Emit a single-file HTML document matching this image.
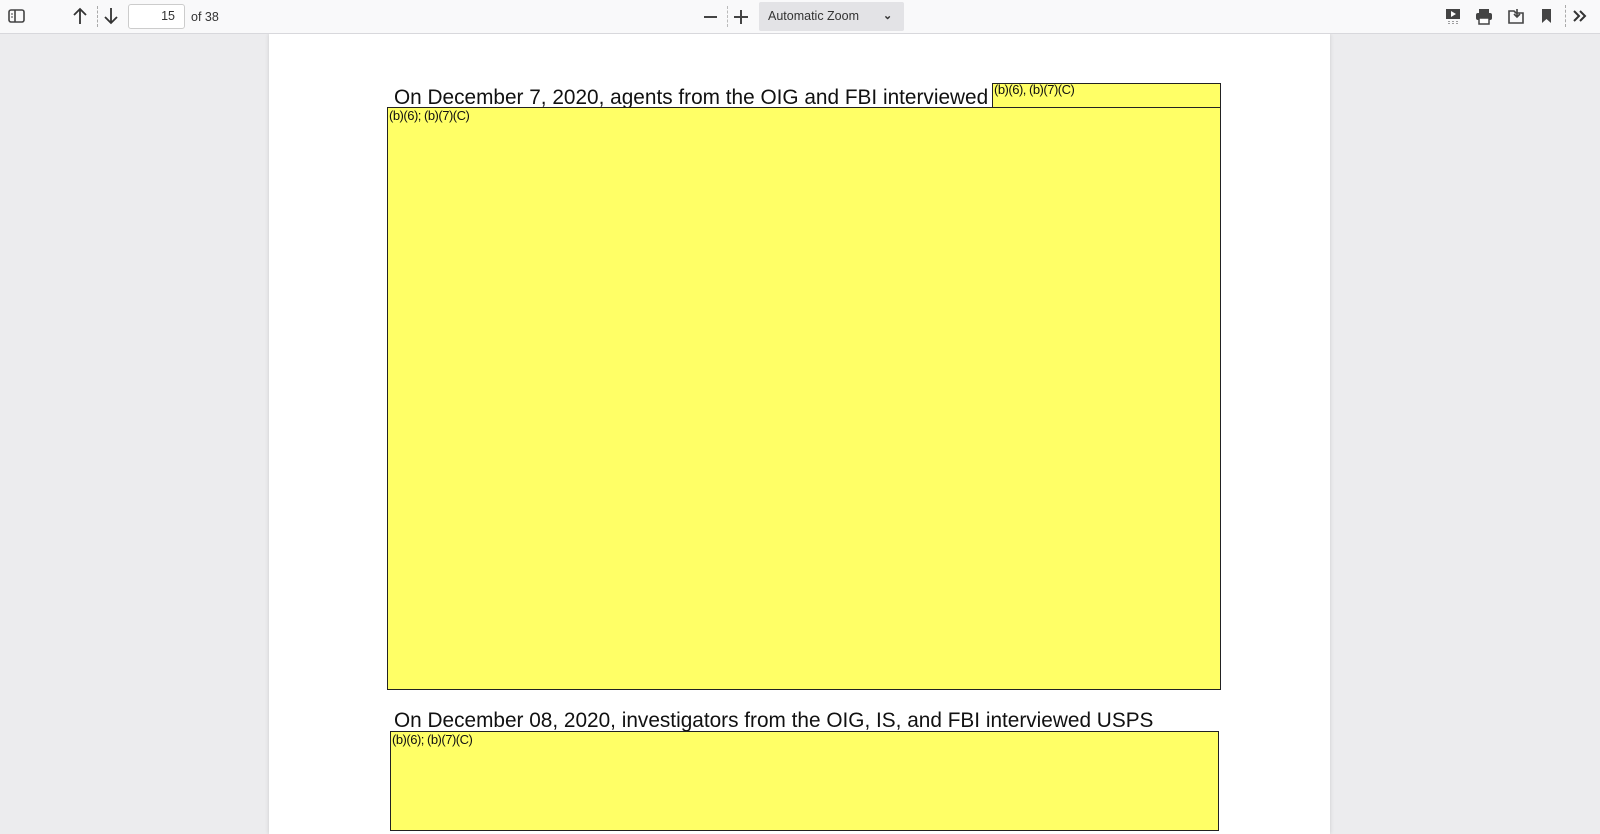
<!DOCTYPE html>
<html><head><style>
body{margin:0;width:1600px;height:810px;overflow:hidden;background:#ececee;font-family:"Liberation Sans",sans-serif;position:relative}
.tb{position:absolute;left:0;top:0;width:1600px;height:33px;background:#f9f9fa;border-bottom:1px solid #d8d8dc;font-size:12.5px;color:#333;z-index:2}
.a{position:absolute}
.page{position:absolute;left:269px;top:34px;width:1061px;height:800px;background:#fff;box-shadow:0 0 4px rgba(0,0,0,.15)}
.y{position:absolute;background:#ffff66;border:1.5px solid #222;box-sizing:border-box;font-size:13px;color:#111;line-height:12px;letter-spacing:-0.5px}
.t{position:absolute;font-size:20.8px;color:#111;white-space:nowrap}
</style></head><body>
<div class="tb">
<svg class="a" style="left:8px;top:8px" width="18" height="17"><rect x="1" y="2" width="15" height="12" rx="2" fill="none" stroke="#444" stroke-width="1.6"/><line x1="7" y1="2" x2="7" y2="14" stroke="#444" stroke-width="1.6"/><line x1="3" y1="6" x2="5" y2="6" stroke="#444"/><line x1="3" y1="9" x2="5" y2="9" stroke="#444"/></svg>
<svg class="a" style="left:72px;top:7px" width="16" height="18"><path d="M8 17V2M2 8l6-6 6 6" fill="none" stroke="#333" stroke-width="1.8"/></svg>
<div class="a" style="left:97px;top:6px;height:21px;border-left:1px dashed #aaa"></div>
<svg class="a" style="left:103px;top:7px" width="16" height="18"><path d="M8 1v15M2 10l6 6 6-6" fill="none" stroke="#333" stroke-width="1.8"/></svg>
<div class="a" style="left:128px;top:4px;width:57px;height:25px;background:#fff;border:1px solid #ccc;border-radius:3px;box-sizing:border-box;text-align:right;padding-right:9px;line-height:23px">15</div>
<div class="a" style="left:191px;top:10px">of 38</div>
<div class="a" style="left:704px;top:16px;width:13px;height:2px;background:#444"></div>
<div class="a" style="left:727px;top:6px;height:21px;border-left:1px dashed #bbb"></div>
<div class="a" style="left:734px;top:16px;width:14px;height:2px;background:#444"></div>
<div class="a" style="left:740px;top:10px;width:2px;height:14px;background:#444"></div>
<div class="a" style="left:759px;top:2px;width:145px;height:29px;background:#e3e3e6;border-radius:2px;line-height:29px;padding-left:9px;box-sizing:border-box">Automatic Zoom<span style="position:absolute;left:124px;font-size:11px;font-weight:bold">&#8964;</span></div>
<svg class="a" style="left:1444px;top:8px" width="18" height="17"><rect x="2" y="1" width="14" height="10" fill="#444"/><path d="M7 3l5 3-5 3z" fill="#fff"/><path d="M5 13v3M13 13v3M9 13v3" stroke="#444" stroke-dasharray="1 1"/></svg>
<svg class="a" style="left:1475px;top:8px" width="18" height="17"><rect x="4" y="1" width="10" height="4" fill="#444"/><rect x="1" y="5" width="16" height="7" rx="2" fill="#444"/><rect x="4" y="10" width="10" height="6" fill="#fff" stroke="#444" stroke-width="1.5"/></svg>
<svg class="a" style="left:1507px;top:7px" width="18" height="18"><path d="M2 4h5l2 2h7v10H2z" fill="none" stroke="#444" stroke-width="1.6"/><path d="M10 2v8M7 7l3 3 3-3" fill="none" stroke="#444" stroke-width="1.6"/></svg>
<svg class="a" style="left:1541px;top:8px" width="12" height="16"><path d="M1 1h9v14l-4.5-4L1 15z" fill="#444"/></svg>
<div class="a" style="left:1565px;top:5px;height:22px;border-left:1px dashed #aaa"></div>
<svg class="a" style="left:1572px;top:9px" width="16" height="14"><path d="M2 2l5 5-5 5M8 2l5 5-5 5" fill="none" stroke="#333" stroke-width="2"/></svg>
</div>
<div class="page"></div>
<div class="t" style="left:394px;top:86px">On December 7, 2020, agents from the OIG and FBI interviewed</div>
<div class="y" style="left:992px;top:83px;width:229px;height:26px;padding-left:1px">(b)(6), (b)(7)(C)</div>
<div class="y" style="left:387px;top:107px;width:834px;height:583px;padding:2px 0 0 1px">(b)(6); (b)(7)(C)</div>
<div class="t" style="left:394px;top:709px">On December 08, 2020, investigators from the OIG, IS, and FBI interviewed USPS</div>
<div class="y" style="left:390px;top:731px;width:829px;height:100px;padding:2px 0 0 1px">(b)(6); (b)(7)(C)</div>
</body></html>
